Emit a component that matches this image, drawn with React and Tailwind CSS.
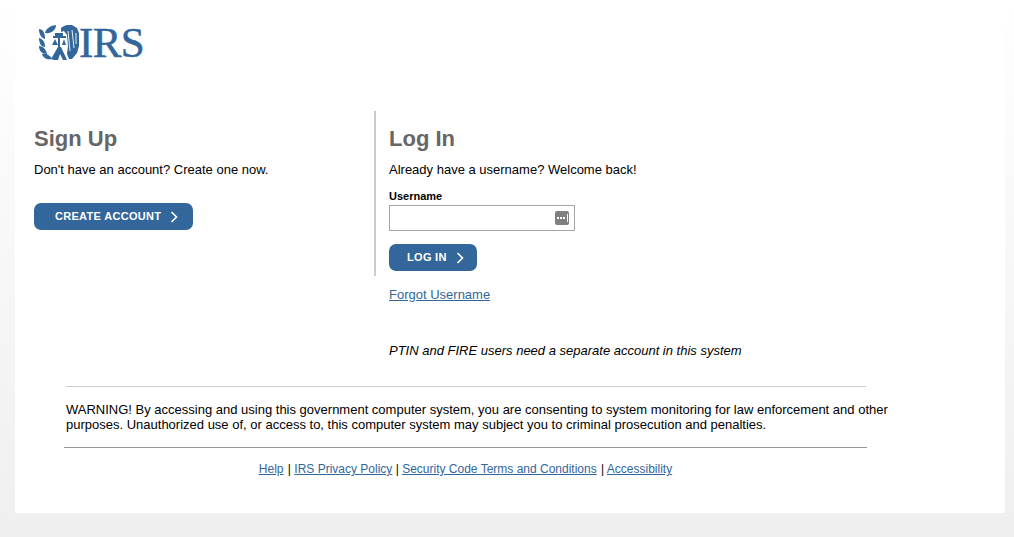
const Chevron = () => (
  <svg width="8" height="12" viewBox="0 0 8 12" fill="none" stroke="#fff" strokeWidth="1.6">
    <path d="M1.5 1l5 5-5 5" />
  </svg>
);

const Seal = () => (
  <svg width="40" height="35" viewBox="0 0 40 35" fill="#33669a" className="shrink-0">
    {/* wreath leaves */}
    <path d="M6 8C7 4 10 1 17 0c0 5-5 9-11 8z" />
    <path d="M0 4c4 0 6 4 6 10C2 13 0 9 0 4z" />
    <path d="M0 13c4 1 6 4 6 9-4 0-6-4-6-9z" />
    <path d="M0 21c4 0 7 3 8 8-5 0-8-3-8-8z" />
    <path d="M3 29c4-1 8 1 10 5-5 1-9-1-10-5z" />
    {/* scales: beam, pole, pans */}
    <path d="M14 11h13v2h-6v11h-2V13h-5z" />
    <path d="M16 8h8v3h-8z" />
    <path d="M16 14l3 6h-6zM25 14l2 6h-4z" />
    {/* shield at the foot */}
    <path d="M19 22h3l6 13h-4l-3-6-2 6h-4l-3-1z" />
    {/* eagle */}
    <path d="M22 3l3-2 3-1 5 0 5 3 2 5v13l-2 7-5 6h-3l-2-5 1-8-1-11-3-4-3 1z" />
    <path d="M29 6l2 20M33 5l2 18M37 8l0 11" stroke="#fff" strokeWidth="0.9" fill="none" />
  </svg>
);

export default function App() {
  return (
    <div className="h-[537px] bg-gradient-to-b from-white to-[#efefef] pl-[15px] pr-[9px] font-['Liberation_Sans',Arial,sans-serif] text-[13px] text-black overflow-hidden">
      <div className="bg-white h-[513px]">
        {/* Logo */}
        <div className="flex items-center h-[111px] pl-[24px] pb-[26px]">
          <Seal />
          <span className="font-['Liberation_Serif',serif] text-[43px] leading-none text-[#33669a] tracking-[-0.6px] [-webkit-text-stroke:0.5px_#33669a]">IRS</span>
        </div>

        <div className="flex items-start h-[275px]">
          {/* Sign up */}
          <div className="w-[361px] h-[165px] border-r-2 border-[#cccccc] pl-[19px] pt-[14px]">
            <h2 className="text-[22px] leading-[27px] font-bold text-[#666666]">Sign Up</h2>
            <p className="mt-[9px] leading-[17px]">Don't have an account? Create one now.</p>
            <button className="mt-[25px] w-[159px] h-[27px] rounded-[7px] bg-[#33669a] text-white text-[11px] tracking-[0.3px] font-bold flex items-center pl-[21px] gap-[9px]">
              CREATE ACCOUNT <Chevron />
            </button>
          </div>

          {/* Log in */}
          <div className="pl-[13px] pt-[14px]">
            <h2 className="text-[22px] leading-[27px] font-bold text-[#666666]">Log In</h2>
            <p className="mt-[9px] leading-[17px]">Already have a username? Welcome back!</p>
            <label className="block mt-[11px] text-[11px] leading-[14px] font-bold">Username</label>
            <div className="mt-[2px] w-[186px] h-[26px] border border-[#a6a6a6] flex items-center justify-end pr-[5px]">
              <div className="w-[14px] h-[14px] rounded-[2px] bg-[#808080] flex items-center pl-[2px] gap-[1px]">
                <span className="w-[2px] h-[2px] bg-white" />
                <span className="w-[2px] h-[2px] bg-white" />
                <span className="w-[2px] h-[2px] bg-white" />
                <span className="w-[1px] h-[8px] bg-white ml-[1px]" />
              </div>
            </div>
            <button className="mt-[13px] w-[88px] h-[27px] rounded-[7px] bg-[#33669a] text-white text-[11px] tracking-[0.3px] font-bold flex items-center pl-[18px] gap-[9px]">
              LOG IN <Chevron />
            </button>
            <a href="#" className="block mt-[15px] leading-[17px] text-[#33669a] underline">Forgot Username</a>
            <p className="mt-[39px] leading-[17px] italic">PTIN and FIRE users need a separate account in this system</p>
          </div>
        </div>

        {/* Warning */}
        <div className="ml-[51px] w-[800px] border-t border-[#cccccc] pt-[15px]">
          <p className="w-[830px] text-[13px] leading-[15px]">
            WARNING! By accessing and using this government computer system, you are consenting to system monitoring for law enforcement and other purposes. Unauthorized use of, or access to, this computer system may subject you to criminal prosecution and penalties.
          </p>
        </div>
        <div className="ml-[49px] mt-[15px] w-[803px] border-t border-[#999999] pt-[14px] text-center text-[12px] leading-[14px]">
          <a href="#" className="text-[#33669a] underline">Help</a>
          <span className="ml-[1px]">{' | '}</span>
          <a href="#" className="text-[#33669a] underline">IRS Privacy Policy</a>
          {' | '}
          <a href="#" className="text-[#33669a] underline">Security Code Terms and Conditions</a>
          <span className="ml-[1px]">{' | '}</span>
          <a href="#" className="text-[#33669a] underline">Accessibility</a>
        </div>
      </div>
    </div>
  );
}
